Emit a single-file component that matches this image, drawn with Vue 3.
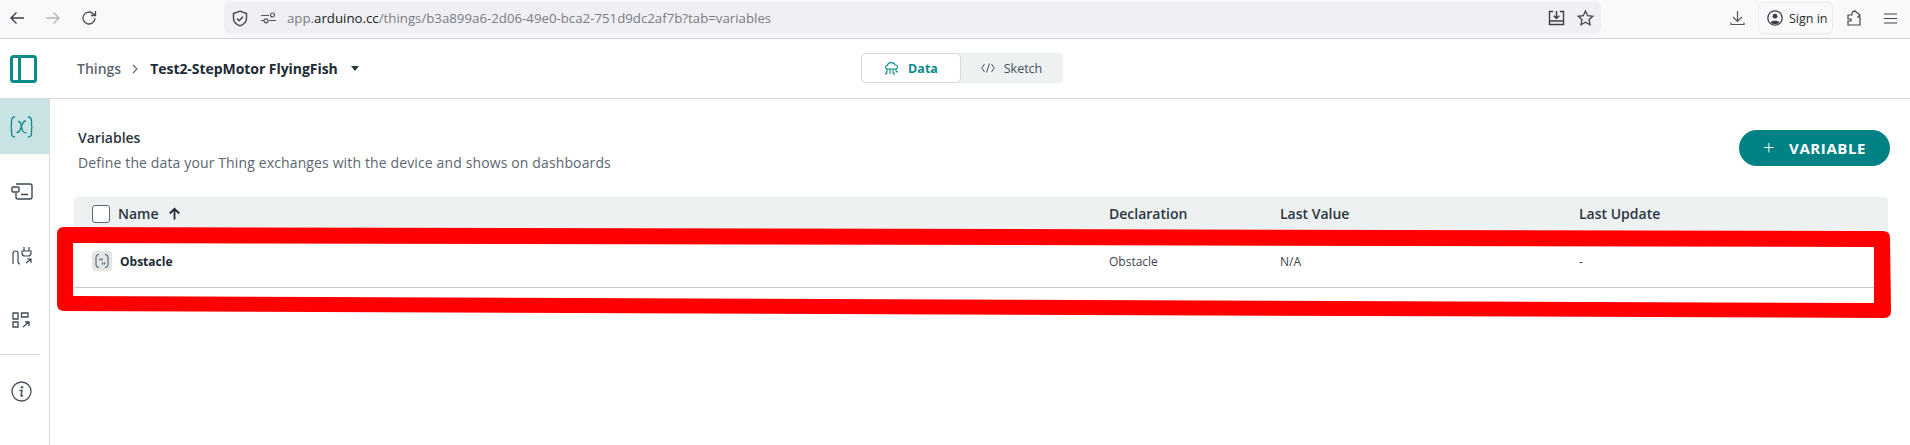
<script setup>
const cols = ['Declaration', 'Last Value', 'Last Update']
</script>

<template>
  <div class="page">
    <header class="toolbar">
      <div class="nav">
        <svg class="b" width="16" height="16" viewBox="0 0 16 16"><path d="M15 8H2M7.500 2.500 2 8l5.500 5.500" fill="none" stroke="#3c3b41" stroke-width="1.300"/></svg>
        <svg class="b" width="16" height="16" viewBox="0 0 16 16"><path d="M1 8h13M8.500 2.500 14 8l-5.500 5.500" fill="none" stroke="#b5b5b9" stroke-width="1.300"/></svg>
        <svg class="b" width="16" height="16" viewBox="0 0 16 16"><path d="M14 8a6 6 0 1 1-1.800-4.300L14.500 5.500M14.500 1v4.500H10" fill="none" stroke="#4a4a50" stroke-width="1.300"/></svg>
      </div>
      <div class="urlbar">
        <svg width="16" height="17" viewBox="0 0 16 17"><path d="M8 1.200 14.500 3.500v5c0 3.500-3 6-6.500 7.300C4.500 14.500 1.500 12 1.500 8.500v-5z" fill="none" stroke="#44434a" stroke-width="1.400"/><path d="m5 8.500 2.200 2.200L11 6.800" fill="none" stroke="#44434a" stroke-width="1.400"/></svg>
        <svg class="sl" width="15" height="12" viewBox="0 0 15 12"><path d="M0 3.500h8M0 8.500h3M8 8.500h7" stroke="#55545a" fill="none" stroke-width="1.200"/><circle cx="11.500" cy="3" r="2" fill="none" stroke="#55545a" stroke-width="1.200"/><circle cx="5" cy="8.800" r="2" fill="none" stroke="#55545a" stroke-width="1.200"/></svg>
        <div class="url"><span class="dim">app.</span><span class="dark">arduino.cc</span><span class="dim">/things/b3a899a6-2d06-49e0-bca2-751d9dc2af7b?tab=variables</span></div>
        <svg class="imp" width="17" height="16" viewBox="0 0 17 16"><path d="M5 1.500H1.500v13h14v-13H12M1.500 11h14M8.500 1v7M5.800 5.800l2.700 2.700 2.700-2.700" fill="none" stroke="#3f3e45" stroke-width="1.400"/></svg>
        <svg class="star" width="17" height="16" viewBox="0 0 17 16"><path d="m8.500 1 2.200 4.700 5 .6-3.700 3.400 1 5L8.500 12.300 4 14.700l1-5L1.300 6.300l5-.6z" fill="none" stroke="#44434a" stroke-width="1.300"/></svg>
      </div>
      <div class="rightbar">
        <svg width="15" height="16" viewBox="0 0 15 16"><path d="M7.500 1v10M3 7l4.500 4.500L12 7M1 12.500v2h13v-2" fill="none" stroke="#55545a" stroke-width="1.200"/></svg>
        <div class="signin">
          <svg width="16" height="16" viewBox="0 0 16 16"><circle cx="8" cy="8" r="7.200" fill="none" stroke="#3f3e45" stroke-width="1.300"/><circle cx="8" cy="6.200" r="2.400" fill="#3f3e45"/><path d="M3.500 12.500c1-2.500 8-2.500 9 0-2 2-7 2-9 0z" fill="#3f3e45"/></svg>
          <span>Sign in</span>
        </div>
        <svg class="ext" width="14" height="16" viewBox="0 0 14 16"><path d="M1 5h4V3a2 2 0 0 1 3-1.500L8 1l5 4-2 2h2v8H1v-4h3V9H1z" fill="none" stroke="#44434a" stroke-width="1.200"/></svg>
        <svg class="menu" width="13" height="11" viewBox="0 0 13 11"><path d="M0 1h13M0 5.500h13M0 10h13" stroke="#44434a" stroke-width="1.200"/></svg>
      </div>
    </header>

    <div class="apphdr">
      <div class="hl">
        <svg class="panel" width="27" height="28" viewBox="0 0 27 28"><rect x="1.500" y="1.500" width="24" height="25" rx="2" fill="none" stroke="#0c8a8c" stroke-width="3"/><path d="M9.500 2v24" stroke="#0c8a8c" stroke-width="3"/></svg>
        <span class="things">Things</span>
        <svg class="chev" width="6" height="10" viewBox="0 0 6 10"><path d="m1 1 4 4-4 4" fill="none" stroke="#5a6470" stroke-width="1.100"/></svg>
        <span class="title">Test2-StepMotor FlyingFish</span>
        <svg class="caret" width="8" height="5" viewBox="0 0 8 5"><path d="M0 0h8L4 5z" fill="#2b3540"/></svg>
      </div>
      <div class="toggle">
        <div class="tab on">
          <svg width="15" height="14" viewBox="0 0 15 14"><path d="M3.500 8C1 8 .8 4.500 3.500 4.200 4 1 10 .5 11 4c3-.2 3.300 4 .5 4zM3 8v3q0 2-2 2M6 8v5M9 8v3q0 2 2 2M12 8v2q0 1 2 1" fill="none" stroke="#0c8a8c" stroke-width="1.100"/></svg>
          <span>Data</span>
        </div>
        <div class="tab">
          <svg width="14" height="10" viewBox="0 0 14 10"><path d="M3.500 1 .8 5l2.700 4M10.500 1l2.700 4-2.700 4M8.500.5l-3 9" fill="none" stroke="#454f5a" stroke-width="1"/></svg>
          <span>Sketch</span>
        </div>
      </div>
    </div>

    <div class="body">
      <aside class="side">
        <div class="si active">
          <svg width="23" height="22" viewBox="0 0 23 22"><path d="M5 1Q1.500 1 1.500 5v4q0 2-1 2 1 0 1 2v4q0 4 3.500 4M18 1q3.500 0 3.500 4v4q0 2 1 2-1 0-1 2v4q0 4-3.500 4M6.500 16.500c3 0 3.200-1.500 4.700-5.500S13 5 16 5M8 5.500c2.500 0 2.500 1.500 3.500 5.500s1.500 6 5 6" fill="none" stroke="#0c8a8c" stroke-width="1.300"/></svg>
        </div>
        <div class="si">
          <svg width="22" height="17" viewBox="0 0 22 17"><path d="M5 1h14q2 0 2 2v11q0 2-2 2H7q-2 0-2-2v-4M10 11.500h7" fill="none" stroke="#3f4953" stroke-width="1.400"/><rect x="1" y="4" width="7" height="5" rx="1" fill="#fff" stroke="#3f4953" stroke-width="1.400"/></svg>
        </div>
        <div class="si">
          <svg width="20" height="19" viewBox="0 0 20 19"><path d="M1 18V8q0-3 2.500-3T6 8v7q0 3 2 3M12 1v4M17 1v4M10 5h9v2q0 3-3 3h-3q-3 0-3-3zM14 17l5-4M15 13h4v4" fill="none" stroke="#3f4953" stroke-width="1.200"/></svg>
        </div>
        <div class="si">
          <svg width="19" height="16" viewBox="0 0 19 16"><path d="M1 1h5v6H1zM1 10h5v5H1zM9.500 1H16v4H9.500zM11 15l6-5M13 10h4v4" fill="none" stroke="#3f4953" stroke-width="1.300"/></svg>
        </div>
        <div class="sdiv"></div>
        <div class="si info">
          <svg width="21" height="21" viewBox="0 0 21 21"><circle cx="10.500" cy="10.500" r="9.500" fill="none" stroke="#4a535c" stroke-width="1.300"/><circle cx="11" cy="6.300" r="1.200" fill="#4a535c"/><path d="M8.500 9.500h2.500l-1 5q0 1 2 0" fill="none" stroke="#4a535c" stroke-width="1.400"/></svg>
        </div>
      </aside>

      <main class="main">
        <div class="head">
          <div>
            <div class="h1">Variables</div>
            <div class="h2">Define the data your Thing exchanges with the device and shows on dashboards</div>
          </div>
          <button class="add"><span class="plus">+</span><span>VARIABLE</span></button>
        </div>
        <div class="table">
          <div class="row th">
            <div class="c name">
              <span class="cb"></span>
              <span class="nm">Name</span>
              <svg width="13" height="13" viewBox="0 0 13 13"><path d="M6.500 12.500V2M1.800 6.500l4.700-4.700 4.700 4.700" fill="none" stroke="#232c35" stroke-width="1.800"/></svg>
            </div>
            <div v-for="c in cols" :key="c" class="c">{{ c }}</div>
          </div>
          <div class="row td">
            <div class="c name">
              <span class="vi">
                <svg width="14" height="16" viewBox="0 0 14 16"><path d="M4 1.500Q1 1.500 1 4v8q0 2.500 3 2.500M10 1.500q3 0 3 2.500v8q0 2.500-3 2.500" fill="none" stroke="#454f5a" stroke-width="1"/><path d="M5 5.500v2M7 5.500v2M7.500 9.500v2M9.500 9.500v2" stroke="#454f5a" stroke-width="1.200"/></svg>
              </span>
              <span class="ob">Obstacle</span>
            </div>
            <div class="c">Obstacle</div>
            <div class="c">N/A</div>
            <div class="c">-</div>
          </div>
        </div>
      </main>
    </div>

    <svg class="mark" width="1910" height="445" viewBox="0 0 1910 445">
      <path fill-rule="evenodd" fill="#ff0000" d="M64 227 L1883 231 Q1890 231 1890 238 L1891 311 Q1891 318 1884 318 L64 311 Q57 311 57 304 L57 234 Q57 227 64 227 Z M73 243 L73 296 L1874 303 L1874 247 Z"/>
    </svg>
  </div>
</template>

<style>
html, body { margin: 0; background: #fff; overflow: hidden; }
</style>

<style scoped>
.page { position: relative; width: 1910px; height: 445px; overflow: hidden; display: flex; flex-direction: column; font-family: "Open Sans", "Noto Sans", sans-serif; color: #202b35; background: #fff; }
.toolbar { height: 36px; padding-bottom: 2px; flex: none; box-sizing: content-box; background: #f9f9fb; border-bottom: 1px solid #cfcfd8; display: flex; align-items: center; }
.nav { width: 224px; padding-left: 9px; box-sizing: border-box; display: flex; gap: 20px; flex: none; }
.urlbar { width: 1377px; height: 32px; flex: none; background: #f0f0f4; border-radius: 6px; display: flex; align-items: center; padding-left: 8px; box-sizing: border-box; }
.sl { margin-left: 13px; }
.url { margin-left: 11px; font-size: 13.250px; flex: 1; white-space: nowrap; }
.dim { color: #7b7b82; }
.dark { color: #18181d; }
.imp { margin-right: 12px; }
.star { margin-right: 7px; }
.rightbar { flex: 1; display: flex; align-items: center; padding-left: 129px; }
.signin { margin-left: 13px; width: 75px; height: 32px; box-sizing: border-box; border: 1px solid #ececf0; border-radius: 6px; display: flex; align-items: center; gap: 6px; padding-left: 8px; font-size: 12.500px; color: #2c2b31; }
.ext { margin-left: 14px; }
.menu { margin-left: 23px; }
.apphdr { height: 59px; flex: none; border-bottom: 1px solid #d4d8db; position: relative; display: flex; align-items: center; }
.hl { display: flex; align-items: center; padding-left: 10px; }
.panel { margin-right: 40px; }
.things { font-size: 14px; color: #5b6670; font-weight: 600; }
.chev { margin: 0 12px 0 11px; }
.title { font-size: 14px; font-weight: 700; color: #202b35; letter-spacing: -0.05px; }
.caret { margin-left: 13px; }
.toggle { position: absolute; left: 861px; top: 14px; width: 202px; height: 30px; background: #edf1f2; border-radius: 5px; display: flex; }
.tab { width: 101px; height: 30px; box-sizing: border-box; display: flex; align-items: center; justify-content: center; gap: 9px; font-size: 12.500px; color: #454f5a; }
.tab.on { width: 100px; background: #fff; border: 1px solid #d3d9dc; border-radius: 5px; color: #0c8a8c; font-weight: 700; }
.body { flex: 1; display: flex; min-height: 0; }
.side { width: 50px; flex: none; box-sizing: border-box; border-right: 1px solid #d4d8db; display: flex; flex-direction: column; }
.si { height: 55px; flex: none; display: flex; align-items: center; justify-content: center; margin-bottom: 9px; }
.si.active { background: #c9e2e3; margin-bottom: 10px; }
.si svg { transform: translateX(-3px); }
.sdiv { height: 1px; background: #d4d8db; width: 40px; margin-top: -2px; }
.si.info { margin-top: 9px; }
.main { flex: 1; min-width: 0; padding-top: 29px; box-sizing: border-box; }
.head { display: flex; justify-content: space-between; align-items: flex-start; padding: 0 20px 0 28px; margin-bottom: 24px; }
.h1 { font-size: 14px; line-height: 20px; font-weight: 600; color: #2b3540; }
.h2 { font-size: 14px; line-height: 20px; margin-top: 5px; color: #5b6670; letter-spacing: 0.13px; }
.add { margin-top: 2px; width: 151px; height: 36px; border: 0; border-radius: 18px; background: #008184; color: #fff; font-family: inherit; font-size: 15px; font-weight: 700; letter-spacing: 0.6px; display: flex; align-items: center; padding: 0 0 0 24px; }
.plus { font-size: 20px; font-weight: 300; margin-right: 14px; line-height: 1; }
.table { margin: 0 22px 0 24px; }
.row { display: grid; grid-template-columns: 1017px 171px 299px 1fr; padding-left: 18px; }
.th { height: 33px; background: #edf1f2; border-radius: 4px 4px 0 0; align-items: center; font-size: 14px; font-weight: 600; color: #2b3540; }
.td { height: 58px; box-sizing: border-box; border-bottom: 1px solid #c9c9c9; align-items: center; padding-top: 5px; font-size: 12px; color: #3a444e; }
.c { display: flex; align-items: center; white-space: nowrap; }
.cb { width: 18px; height: 18px; box-sizing: border-box; border: 1px solid #5b6670; border-radius: 3px; background: #fff; margin-right: 8px; }
.nm { margin-right: 9px; }
.vi { width: 20px; height: 20px; background: #e3e6e7; border-radius: 3px; display: flex; align-items: center; justify-content: center; margin-right: 8px; }
.ob { font-weight: 700; color: #202b35; }
.mark { position: absolute; left: 0; top: 0; pointer-events: none; }
</style>
